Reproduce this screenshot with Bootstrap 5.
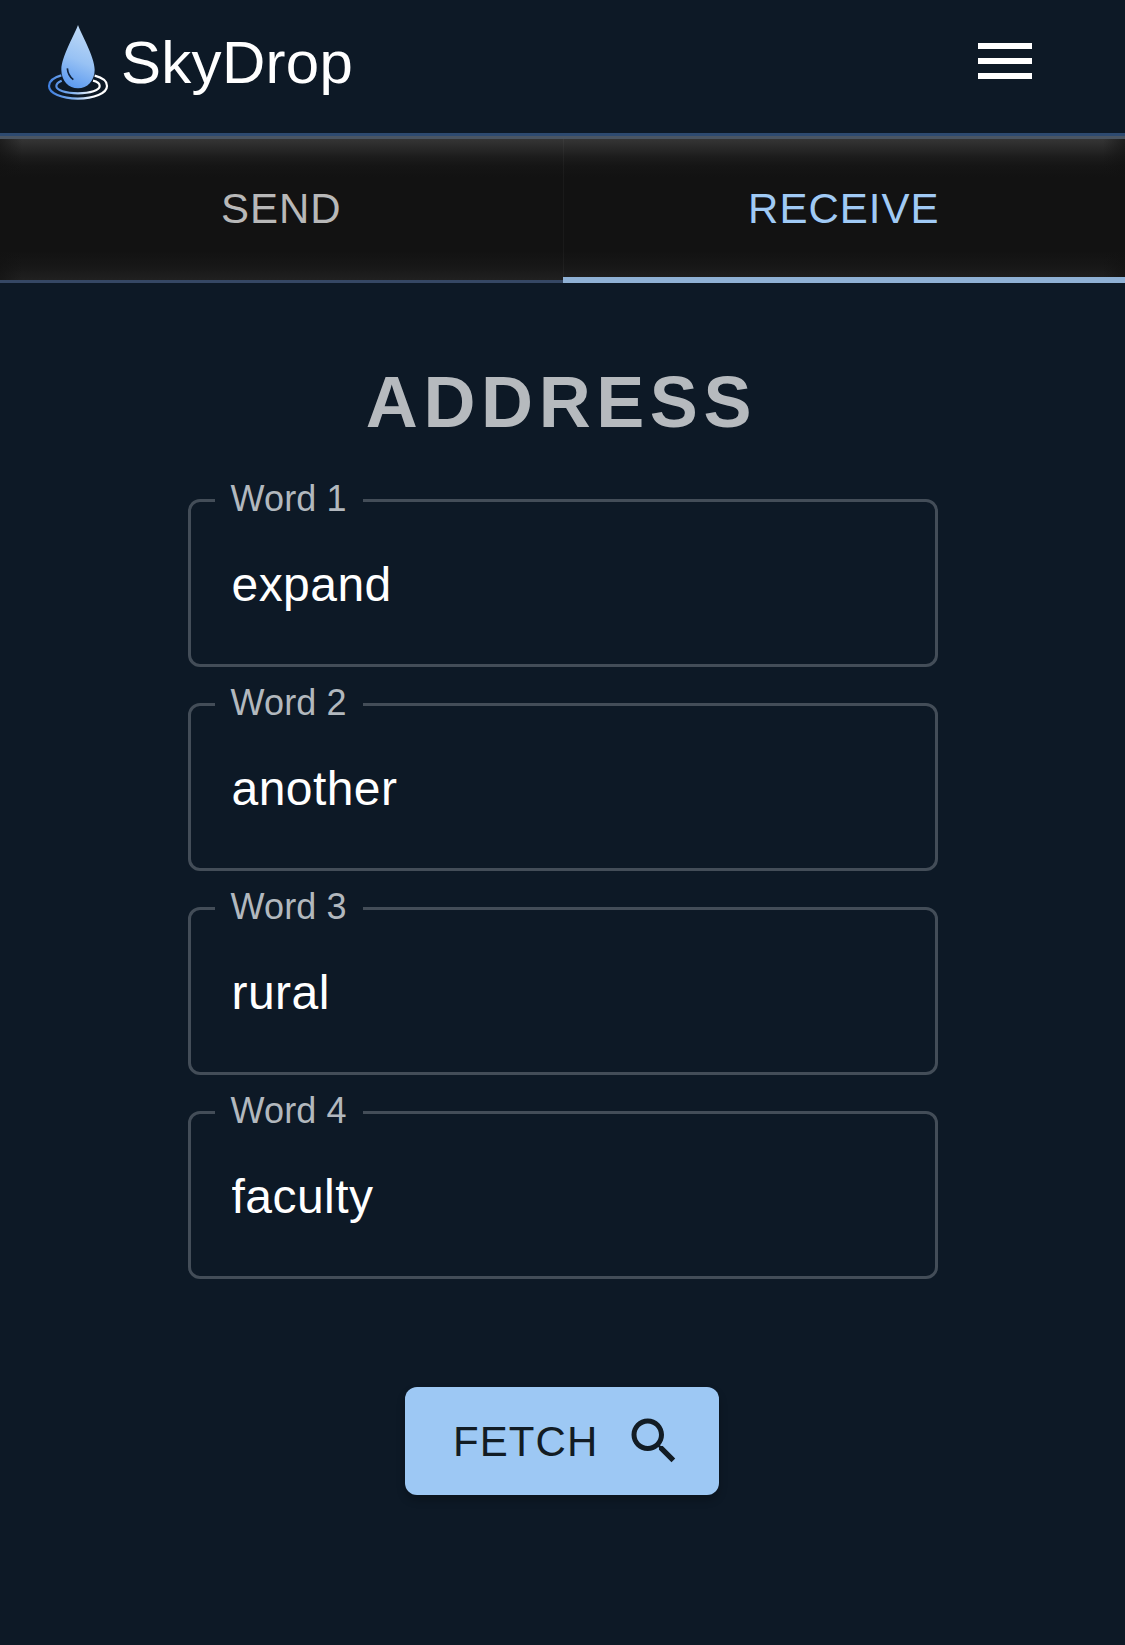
<!DOCTYPE html>
<html lang="en" data-bs-theme="dark">
<head>
<meta charset="utf-8">
<meta name="viewport" content="width=device-width, initial-scale=1">
<title>SkyDrop</title>
<link href="https://cdn.jsdelivr.net/npm/bootstrap@5.3.0/dist/css/bootstrap.min.css" rel="stylesheet">
<style>
  body { background: #0d1926; color: #fff; font-family: "Liberation Sans", Arial, sans-serif; min-height: 1645px; overflow-x: hidden; }
  .sky-header { height: 139px; padding: 0 84px 6px 30px; background: linear-gradient(#2d4a70 50%, #4a5562 50%) bottom / 100% 6px no-repeat #0d1926; }
  .sky-logo { width: 100px; height: 100px; margin-top: -14px; }
  .sky-name { font-size: 60px; letter-spacing: .3px; line-height: 90px; margin: -8px 0 0 -9px; color: #fff; }
  .sky-burger { margin-top: -11px; }
  .sky-tabs {
    height: 144px; border-bottom: 3px solid #354764;
    background:
      linear-gradient(90deg, rgba(18,18,18,.65), rgba(18,18,18,0) 22px, rgba(18,18,18,0) calc(100% - 22px), rgba(18,18,18,.65)),
      linear-gradient(#353535, #2a2a2a 8px, #1c1c1c 18px, #151515 27px, #121212 38px, #121212 112px, #171717 127px, #202020 141px);
  }
  .sky-tabs .nav-link { position: relative; border-radius: 0; padding: 0; height: 141px; font-size: 42px; line-height: 139px; letter-spacing: 1px; color: #b8b8b8; }
  .sky-tabs .nav-link.active { color: #a0caf5; background: none; }
  .sky-tabs .nav-link.active::before { content: ""; position: absolute; left: 0; top: 0; bottom: 3px; width: 1px; background: rgba(255,255,255,.035); }
  .sky-tabs .nav-link.active::after { content: ""; position: absolute; left: .5px; right: 0; bottom: -3px; height: 6px; background: #8fb1d5; }
  .sky-title { font-size: 72px; font-weight: 700; letter-spacing: 5.6px; line-height: 84px; color: #b6babe; margin: 77px 2px 55px 0; }
  .sky-form { width: 750px; gap: 36px; }
  .sky-field { position: relative; }
  .sky-field label { position: absolute; left: 27px; top: -21px; width: 148px; padding-left: 16px; font-size: 36px; line-height: 42px; letter-spacing: .15px; color: #b2b8be; background: linear-gradient(#0d1926, #0d1926) 0 21px / 100% 3px no-repeat; }
  .sky-field .form-control { height: 168px; border: 3px solid #434d58; border-radius: 12px; background: transparent; color: #fff; font-size: 48px; letter-spacing: .45px; padding: 2px 39px 0 41px; }
  .sky-fetch { position: relative; width: 314px; height: 108px; margin: 108px 1px 0 0; padding: 0 35px 0 48px; border: 0; border-radius: 12px; background: #9dc8f4; color: #121c24; font-size: 42px; letter-spacing: 1.1px; box-shadow: 0 5px 9px rgba(0,0,0,.24); }
</style>
</head>
<body>
<header class="sky-header d-flex align-items-center justify-content-between">
  <a class="d-flex align-items-center text-decoration-none" href="#">
    <svg class="sky-logo" viewBox="0 0 300 300" fill="none" aria-hidden="true">
      <defs>
        <linearGradient id="drop" x1="175" y1="75" x2="110" y2="225" gradientUnits="userSpaceOnUse"><stop stop-color="#b9d6f6"/><stop offset=".5" stop-color="#98c2f4"/><stop offset="1" stop-color="#5c9af0"/></linearGradient>
        <linearGradient id="ring" x1="60" y1="250" x2="185" y2="225" gradientUnits="userSpaceOnUse"><stop stop-color="#3f7fe0"/><stop offset=".5" stop-color="#7fb0ee"/><stop offset="1" stop-color="#fff"/></linearGradient>
      </defs>
      <path d="M94 196C68 203 57 215 57 228C57 250 95 266 143.500 266S231 250 231 228C231 213 218 203 194 197" stroke="url(#ring)" stroke-width="6.500"/>
      <path d="M95 212C83 217 79 222 79 228C79 241 107 250 144 250S209 241 209 228C209 221 203 215 189 212" stroke="url(#ring)" stroke-width="6.500"/>
      <path d="M144 45C151 67 194 140 194 179C194 212 172 235 144 235S94 212 94 179C94 140 137 67 144 45Z" fill="url(#drop)"/>
      <path d="M112 175Q114 197 130 209" stroke="#10223a" stroke-width="5"/>
    </svg>
    <span class="sky-name">SkyDrop</span>
  </a>
  <button class="sky-burger btn p-0 border-0 lh-1" type="button" aria-label="Menu">
    <svg class="d-block" width="72" height="72" viewBox="0 0 24 24" fill="#fff"><path d="M3 18h18v-2H3v2zm0-5h18v-2H3v2zm0-7v2h18V6H3z"/></svg>
  </button>
</header>
<nav class="sky-tabs nav nav-fill nav-justified flex-nowrap">
  <a class="nav-link" href="#">SEND</a>
  <a class="nav-link active" href="#" aria-current="page">RECEIVE</a>
</nav>
<main class="d-flex flex-column align-items-center">
  <h1 class="sky-title">ADDRESS</h1>
  <form class="sky-form d-flex flex-column">
    <div class="sky-field"><input class="form-control" id="w1" type="text" value="expand"><label for="w1">Word 1</label></div>
    <div class="sky-field"><input class="form-control" id="w2" type="text" value="another"><label for="w2">Word 2</label></div>
    <div class="sky-field"><input class="form-control" id="w3" type="text" value="rural"><label for="w3">Word 3</label></div>
    <div class="sky-field"><input class="form-control" id="w4" type="text" value="faculty"><label for="w4">Word 4</label></div>
  </form>
  <button class="sky-fetch btn d-flex align-items-center justify-content-between" type="button">
    <span>FETCH</span>
    <svg width="60" height="60" viewBox="0 0 24 24" fill="currentColor"><path d="M15.500 14h-.79l-.28-.27C15.410 12.590 16 11.110 16 9.500 16 5.910 13.090 3 9.500 3S3 5.910 3 9.500 5.910 16 9.500 16c1.610 0 3.090-.59 4.230-1.570l.27.28v.79l5 4.990L20.490 19l-4.990-5zm-6 0C7.010 14 5 11.990 5 9.500S7.010 5 9.500 5 14 7.010 14 9.500 11.990 14 9.500 14z"/></svg>
  </button>
</main>
<script src="https://cdn.jsdelivr.net/npm/bootstrap@5.3.0/dist/js/bootstrap.bundle.min.js"></script>
</body>
</html>
